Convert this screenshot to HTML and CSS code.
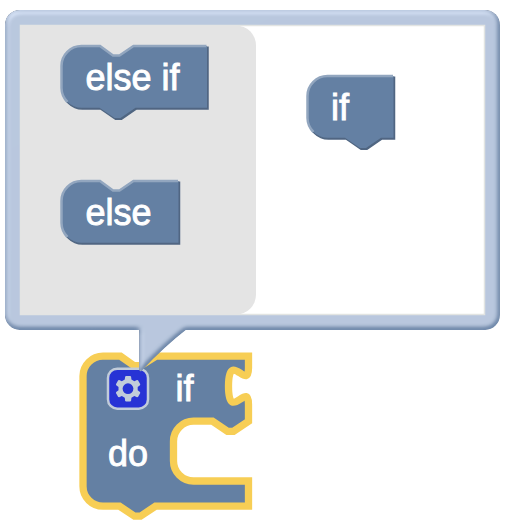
FILE: index.html
```html
<!DOCTYPE html>
<html lang="en">
<head>
<meta charset="utf-8">
<title>Block editor</title>
<link rel="stylesheet" href="styles.css">
</head>
<body>
<svg class="workspace" width="514" height="532" viewBox="0 0 514 532">
  <defs>
    <filter id="emboss" filterUnits="userSpaceOnUse" x="-5" y="-5" width="220" height="170">
      <feGaussianBlur in="SourceAlpha" stdDeviation="1" result="blur"/>
      <feSpecularLighting in="blur" surfaceScale="0.6" specularConstant="0.5" specularExponent="10" lighting-color="white" result="spec">
        <fePointLight x="-5000" y="-10000" z="20000"/>
      </feSpecularLighting>
      <feComposite in="spec" in2="SourceAlpha" operator="in" result="spec"/>
      <feComposite in="SourceGraphic" in2="spec" operator="arithmetic" k1="0" k2="1" k3="1" k4="0"/>
    </filter>
    <path id="elseif-shape" d="M0,20 A20,20 0 0 1 20,0 H38.500 L51.500,9.500 H58 L72,0 H145.500 V61.800 H74 L59,72 H53 L38,61.800 H20 A20,20 0 0 1 0,42 Z"/>
    <path id="else-shape" d="M0,20 A20,20 0 0 1 20,0 H38.500 L51.500,9.500 H58 L72,0 H117 V61.800 H20 A20,20 0 0 1 0,42 Z"/>
    <path id="if-shape" d="M0,20 A20,20 0 0 1 20,0 H86 V61.800 H73.500 L58.500,72 H52.500 L37.500,61.800 H20 A20,20 0 0 1 0,42 Z"/>
  </defs>

  <!-- Selected if / do block -->
  <path class="selected" d="M83,376 A20,20 0 0 1 103,356.200 H120.500 L134,365.700 H141 L156,356.200 H248.500 V368 c0,24 -20,-19.500 -20,18.200 s20,-6 20,18.200 V421.200 L233.500,431.300 H227.500 L212.500,421.200 H193.500 A20,20 0 0 0 173.500,441.200 V461 A20,20 0 0 0 193.500,481 H248.500 V506.200 H155.500 L140.500,516.200 H134.500 L119.500,506.200 H103 A20,20 0 0 1 83,486.200 Z"/>
  <text class="label" x="175.500" y="401">if</text>
  <text class="label" x="108" y="466">do</text>

  <g class="gear" transform="translate(108 368.700) scale(2.5)">
    <rect class="gear-box" width="16" height="16" rx="3.700"/>
    <path class="gear-wheel" d="m4.203,7.296 0,1.368 -0.92,0.677 -0.11,0.41 0.9,1.559 0.41,0.11 1.043,-0.457 1.187,0.683 0.127,1.134 0.3,0.3 1.8,0 0.3,-0.299 0.127,-1.138 1.185,-0.682 1.046,0.458 0.409,-0.11 0.9,-1.559 -0.11,-0.41 -0.92,-0.677 0,-1.366 0.92,-0.677 0.11,-0.41 -0.9,-1.559 -0.409,-0.109 -1.046,0.458 -1.185,-0.682 -0.127,-1.138 -0.3,-0.299 -1.8,0 -0.3,0.3 -0.126,1.135 -1.187,0.682 -1.043,-0.457 -0.41,0.11 -0.899,1.559 0.108,0.409z"/>
    <circle class="gear-hole" cx="8" cy="8" r="2.150"/>
  </g>

  <!-- Mutator bubble -->
  <g class="bubble" transform="scale(2.45)">
    <g filter="url(#emboss)">
      <path d="M56.800,130 V151 L57.500,151.600 Q67,141.500 76.300,134.300 V130 Z"/>
      <rect x="2.040" y="4.080" width="202" height="130.600" rx="6.100"/>
    </g>
  </g>
  <rect class="canvas" x="20.500" y="25.500" width="464" height="289"/>
  <path class="flyout" d="M20.500,25.500 H236 A20,20 0 0 1 256,45.500 V294.500 A20,20 0 0 1 236,314.500 H20.500 Z"/>

  <g transform="translate(61.500 46)">
    <use class="shade" href="#elseif-shape" x="1" y="1.200"/>
    <use class="face" href="#elseif-shape"/>
    <path class="shine" d="M6,56 A20,20 0 0 1 0,42 V20 A20,20 0 0 1 20,0 H38.500 L51.500,9.500 H58 L72,0 H145"/>
    <text class="label" x="24" y="44">else if</text>
  </g>
  <g transform="translate(61.500 181)">
    <use class="shade" href="#else-shape" x="1" y="1.200"/>
    <use class="face" href="#else-shape"/>
    <path class="shine" d="M6,56 A20,20 0 0 1 0,42 V20 A20,20 0 0 1 20,0 H38.500 L51.500,9.500 H58 L72,0 H116.500"/>
    <text class="label" x="24" y="44">else</text>
  </g>
  <g transform="translate(307.500 76)">
    <use class="shade" href="#if-shape" x="1" y="1.200"/>
    <use class="face" href="#if-shape"/>
    <path class="shine" d="M6,56 A20,20 0 0 1 0,42 V20 A20,20 0 0 1 20,0 H85.500"/>
    <text class="label" x="23.500" y="44">if</text>
  </g>
</svg>
</body>
</html>
```

FILE: styles.css
```css
body {
  margin: 0;
  background: #fff;
  overflow: hidden;
}

.workspace {
  display: block;
}

.label {
  font-family: "Liberation Sans", Arial, sans-serif;
  font-size: 36px;
  fill: #fff;
  stroke: #fff;
  stroke-width: 0.9px;
}

.selected {
  fill: #6480a3;
  stroke: #f7ce55;
  stroke-width: 7.3px;
}

.gear-box {
  fill: #2733d5;
  stroke: #c1ccda;
  stroke-width: 1px;
}

.gear-wheel {
  fill: #c1ccda;
}

.gear-hole {
  fill: #2733d5;
}

.bubble {
  fill: #6480a4;
}

.canvas {
  fill: #fff;
  stroke: #e2e4e2;
  stroke-width: 1.5px;
}

.flyout {
  fill: #e4e4e4;
}

.face {
  fill: #6480a3;
}

.shade {
  fill: #506682;
  stroke: #506682;
  stroke-width: 1.5px;
}

.shine {
  fill: none;
  stroke: #92a6bf;
  stroke-width: 2.5px;
}
```
